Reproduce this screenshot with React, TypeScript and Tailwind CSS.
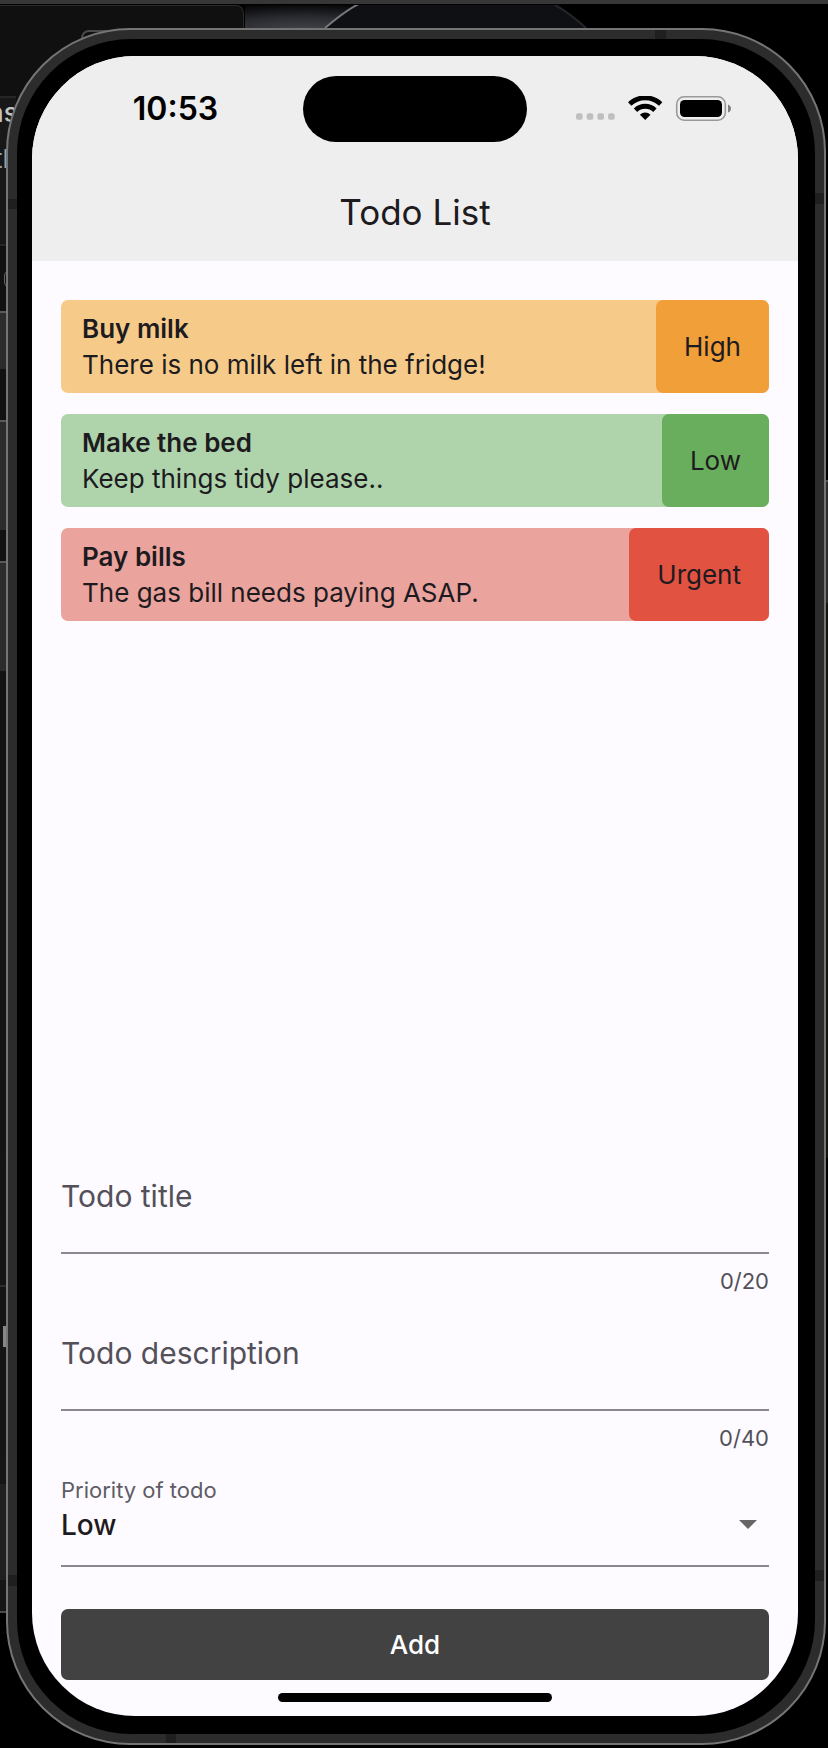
import { useState } from "react";

type Priority = "Low" | "Medium" | "High" | "Urgent";

interface Todo {
  title: string;
  description: string;
  priority: Priority;
}

const todos: Todo[] = [
  { title: "Buy milk", description: "There is no milk left in the fridge!", priority: "High" },
  { title: "Make the bed", description: "Keep things tidy please..", priority: "Low" },
  { title: "Pay bills", description: "The gas bill needs paying ASAP.", priority: "Urgent" },
];

const cardColor: Record<Priority, string> = {
  Low: "bg-[#afd4ac]",
  Medium: "bg-[#f9e29b]",
  High: "bg-[#f6cb8a]",
  Urgent: "bg-[#eba39d]",
};

const tagColor: Record<Priority, string> = {
  Low: "bg-[#69ae5c]",
  Medium: "bg-[#f3c94a]",
  High: "bg-[#f19f38]",
  Urgent: "bg-[#e15241]",
};

/* Slivers of the other windows that show around the phone. */
function Desktop() {
  return (
    <div aria-hidden="true" className="absolute inset-0 overflow-hidden bg-black">
      <div className="absolute top-[5px] left-0 h-[1606px] w-[244px] rounded-tr-lg border-t border-r border-[#2a2a2a] bg-linear-to-b from-[#101010] to-[#161616]" />
      <div className="absolute top-[1611px] left-0 h-[2px] w-2 bg-[#4a4a4a]" />
      <svg className="absolute top-[5px] left-[245px] h-[60px] w-[583px]" viewBox="0 0 583 60">
        <defs>
          <radialGradient id="glow" cx="18%" cy="45%" r="50%">
            <stop offset="0" stopColor="#46474c" />
            <stop offset="0.5" stopColor="#2a2b30" />
            <stop offset="1" stopColor="#000" />
          </radialGradient>
        </defs>
        <rect width="330" height="60" fill="url(#glow)" />
        <path d="M80 23C93 12 103 4 114 -1H308C320 5 330 13 341 23Z" fill="#0f1013" />
        <path d="M80 23C93 12 103 4 114 -1" fill="none" stroke="#77787b" strokeWidth="2" />
        <path d="M308 -1C320 5 330 13 341 23" fill="none" stroke="#25262a" strokeWidth="2" />
      </svg>
      <div className="absolute top-[30px] left-[81px] h-6 w-8 rounded-lg border-2 border-[#4a4a4a]" />
      <div className="absolute top-[96px] left-0 h-[150px] w-4 border-y-2 border-[#262626] bg-[#181818]" />
      <span className="absolute top-[95px] left-[-12px] text-[26px] leading-[36px] font-medium text-[#c4c4c4]">ns</span>
      <span className="absolute top-[141px] left-[-6px] text-[26px] leading-[36px] text-[#a0a0a0]">th</span>
      <div className="absolute top-[270px] left-[4px] h-[18px] w-3 rounded-md border border-[#666666]" />
      <div className="absolute top-[311px] left-0 h-[58px] w-4 border-t-2 border-[#5a5a5a] bg-[#2c2c2c]" />
      <div className="absolute top-[420px] left-0 h-[110px] w-4 border-t-2 border-[#5a5a5a] bg-[#2c2c2c]" />
      <div className="absolute top-[561px] left-0 h-[110px] w-4 border-t-2 border-[#5a5a5a] bg-[#2c2c2c]" />
      <div className="absolute top-[1285px] left-0 h-[2px] w-4 bg-[#2c2c2c]" />
      <div className="absolute top-[1326px] left-[3px] h-[21px] w-[3px] bg-[#888888]" />
      <div className="absolute top-[1484px] left-0 h-[96px] w-4 bg-[#202020]" />
      <div className="absolute top-[480px] right-0 h-[123px] w-3 border-t-2 border-[#555555] bg-[#2c2c2a]" />
      <div className="absolute top-[603px] right-0 h-[555px] w-3 bg-[#12120f]" />
      <div className="absolute inset-x-0 top-0 h-1 bg-[#373737]" />
    </div>
  );
}

function AntennaBands() {
  return (
    <div aria-hidden="true">
      <div className="absolute top-[169px] left-0 h-[10px] w-[9px] bg-[#1f1f1f]" />
      <div className="absolute top-[163px] right-0 h-[11px] w-[9px] bg-[#1f1f1f]" />
      <div className="absolute top-0 right-[158px] h-[9px] w-[11px] bg-[#1f1f1f]" />
      <div className="absolute bottom-[157px] left-0 h-[11px] w-[9px] bg-[#1f1f1f]" />
      <div className="absolute right-0 bottom-[162px] h-[11px] w-[9px] bg-[#1f1f1f]" />
      <div className="absolute bottom-0 left-[158px] h-[9px] w-[10px] bg-[#1f1f1f]" />
    </div>
  );
}

function StatusIcons() {
  return (
    <svg className="h-[26px] w-[156px]" viewBox="0 0 156 26" role="img" aria-label="No signal, Wi-Fi, battery full">
      <g fill="#bfbfbf">
        <rect x="0" y="17.2" width="6.6" height="6.6" rx="2" />
        <rect x="10.7" y="17.2" width="6.6" height="6.6" rx="2" />
        <rect x="21.4" y="17.2" width="6.6" height="6.6" rx="2" />
        <rect x="32.1" y="17.2" width="6.6" height="6.6" rx="2" />
      </g>
      <g fill="none" stroke="#000" strokeWidth="4.8">
        <path d="M53.7 8A22.4 22.4 0 0 1 84.7 8" />
        <path d="M59.5 14.2A13.9 13.9 0 0 1 78.9 14.2" />
      </g>
      <path d="M69.2 24L63.9 18.7A7.8 7.8 0 0 1 74.5 18.7Z" fill="#000" />
      <rect x="100.7" y="0.8" width="48.6" height="23.4" rx="7.4" fill="none" stroke="#999" strokeWidth="1.6" />
      <rect x="104" y="4" width="42" height="17" rx="4.6" fill="#000" />
      <path d="M152 8.4C156 9.8 156 15.2 152 16.6Z" fill="#808080" />
    </svg>
  );
}

function TodoCard({ todo }: { todo: Todo }) {
  return (
    <li className={`flex items-stretch justify-between rounded-[7px] ${cardColor[todo.priority]}`}>
      <div className="pt-[11px] pb-[10px] pl-[21px] text-[26px] leading-[36px]">
        <h2 className="font-semibold">{todo.title}</h2>
        <p>{todo.description}</p>
      </div>
      <span className={`flex items-center rounded-[7px] px-[28px] text-[26px] leading-[36px] ${tagColor[todo.priority]}`}>
        {todo.priority}
      </span>
    </li>
  );
}

interface TextFieldProps {
  id: string;
  label: string;
  max: number;
  value: string;
  onChange: (value: string) => void;
}

function TextField({ id, label, max, value, onChange }: TextFieldProps) {
  return (
    <div className="flex flex-col">
      <label htmlFor={id} className="sr-only">
        {label}
      </label>
      <input
        id={id}
        type="text"
        placeholder={label}
        maxLength={max}
        value={value}
        onChange={(e) => onChange(e.target.value)}
        className="h-[78px] w-full rounded-none border-b-2 border-[#8b898f] bg-transparent pb-[36px] text-[30px] leading-[40px] outline-none placeholder:text-[#535059]"
      />
      <span className="mt-[15px] text-right text-[22px] leading-[24px] text-[#535059]">
        {value.length}/{max}
      </span>
    </div>
  );
}

export default function App() {
  const [items, setItems] = useState(todos);
  const [title, setTitle] = useState("");
  const [description, setDescription] = useState("");
  const [priority, setPriority] = useState<Priority>("Low");

  const addTodo = () => {
    if (!title) return;
    setItems([...items, { title, description, priority }]);
    setTitle("");
    setDescription("");
  };

  return (
    <div className="relative flex min-h-screen flex-col pt-[28px] pr-[2px] pb-[3px] pl-[6px] font-['Inter',sans-serif] text-[#1d1b20]">
      <Desktop />
      <div className="relative flex flex-1 flex-col rounded-[124px] border-2 border-[#757575] bg-[#2c2c2c] p-[9px]">
        <AntennaBands />
        <div className="relative flex flex-1 flex-col rounded-[114px] bg-black pt-[17px] pr-[17px] pb-[18px] pl-[15px]">
          <main className="flex flex-1 flex-col overflow-hidden rounded-[103px] bg-[#fdfbff]">
            <header className="bg-[#eeeeee] pt-[20px] pb-[24px]">
              <div className="grid grid-cols-[1fr_224px_1fr] items-center">
                <time className="pl-4 text-center text-[32px] leading-[40px] font-semibold text-black">10:53</time>
                <div className="h-[66px] rounded-full bg-black" />
                <div className="flex justify-end pr-[66px]">
                  <StatusIcons />
                </div>
              </div>
              <h1 className="mt-[45px] text-center text-[35px] leading-[50px]">Todo List</h1>
            </header>

            <ul className="flex flex-1 flex-col gap-[21px] px-[29px] pt-[39px]">
              {items.map((todo) => (
                <TodoCard key={todo.title} todo={todo} />
              ))}
            </ul>

            <form
              className="flex flex-col px-[29px]"
              onSubmit={(e) => {
                e.preventDefault();
                addTodo();
              }}
            >
              <div className="flex flex-col gap-[40px]">
                <TextField id="title" label="Todo title" max={20} value={title} onChange={setTitle} />
                <TextField
                  id="description"
                  label="Todo description"
                  max={40}
                  value={description}
                  onChange={setDescription}
                />
              </div>

              <label htmlFor="priority" className="mt-[28px] text-[22px] leading-[24px] text-[#5f5c65]">
                Priority of todo
              </label>
              <div className="relative mt-[5px] flex flex-col">
                <select
                  id="priority"
                  value={priority}
                  onChange={(e) => setPriority(e.target.value as Priority)}
                  className="h-[60px] w-full appearance-none rounded-none border-b-2 border-[#8b898f] bg-transparent pb-[22px] text-[28px] leading-[36px] font-medium outline-none"
                >
                  <option>Low</option>
                  <option>Medium</option>
                  <option>High</option>
                  <option>Urgent</option>
                </select>
                <svg
                  className="pointer-events-none absolute top-[13px] right-[12px] h-[9px] w-[18px]"
                  viewBox="0 0 18 9"
                  aria-hidden="true"
                >
                  <path d="M0 0H18L9 9Z" fill="#666" />
                </svg>
              </div>

              <button
                type="submit"
                className="mt-[42px] h-[71px] rounded-[7px] bg-[#424242] text-[26px] leading-[36px] font-medium text-white"
              >
                Add
              </button>
            </form>

            <div className="mx-auto mt-[13px] mb-[14px] h-[9px] w-[274px] rounded-full bg-black" />
          </main>
        </div>
      </div>
    </div>
  );
}
